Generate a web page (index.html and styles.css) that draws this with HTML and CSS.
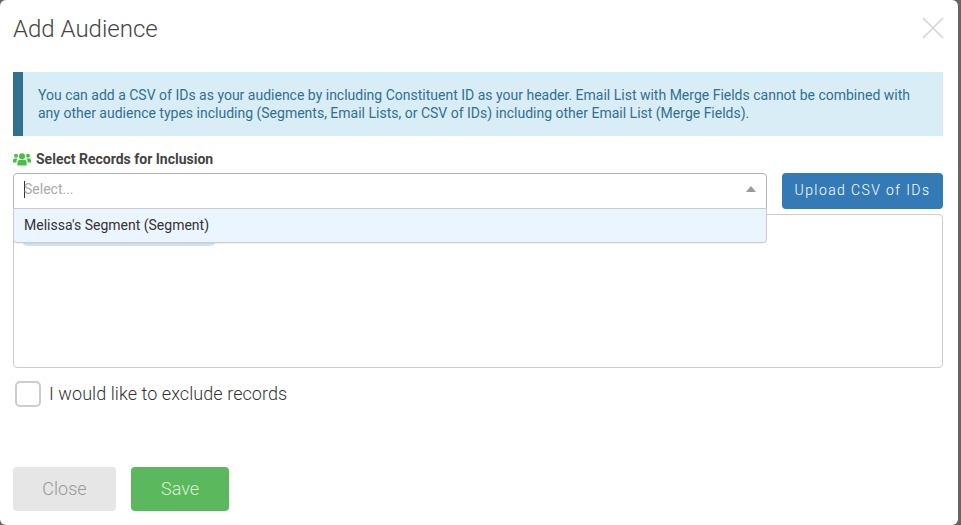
FILE: index.html
```html
<!DOCTYPE html>
<html lang="en">
<head>
    <meta charset="UTF-8">
    <meta name="viewport" content="width=device-width, initial-scale=1.0">
    <title>Add Audience</title>
    <link rel="stylesheet" href="styles.css">
</head>
<body>
    <div class="modal">
        <div class="modal-header">
            <h1>Add Audience</h1>
            <svg class="close-icon" width="24" height="24" viewBox="0 0 24 24">
                <path d="M2 2 L22 22 M22 2 L2 22" stroke="#d4d4d4" stroke-width="1.6" fill="none"/>
            </svg>
        </div>

        <div class="alert">
            You can add a CSV of IDs as your audience by including Constituent ID as your header. Email List with Merge Fields cannot be combined with any other audience types including (Segments, Email Lists, or CSV of IDs) including other Email List (Merge Fields).
        </div>

        <div class="field-label">
            <svg class="users-icon" width="18" height="13" viewBox="0 0 18 13">
                <circle cx="9" cy="3.2" r="3" fill="#45c045"/>
                <circle cx="3" cy="2.8" r="2" fill="#45c045"/>
                <circle cx="15" cy="2.8" r="2" fill="#45c045"/>
                <path d="M4.4 12.5 V9.6 C4.4 7.6 5.8 6.8 7 6.8 H11 C12.2 6.8 13.6 7.6 13.6 9.6 V12.5 Z" fill="#45c045"/>
                <path d="M0 9.4 V7.2 C0 6 1 5.4 2 5.4 H4.6 C3.8 6.4 3.4 7.4 3.4 9.4 Z M18 9.4 V7.2 C18 6 17 5.4 16 5.4 H13.4 C14.2 6.4 14.6 7.4 14.6 9.4 Z" fill="#45c045"/>
            </svg>
            Select Records for Inclusion
        </div>

        <div class="select-row">
            <div class="select">
                <div class="select-control">
                    <span class="caret-bar"></span>
                    <span class="placeholder">Select...</span>
                    <span class="arrow"></span>
                </div>
                <div class="select-menu">
                    <div class="select-option">Melissa's Segment (Segment)</div>
                </div>
            </div>
            <button class="btn btn-upload">Upload CSV of IDs</button>
        </div>

        <div class="selected-box">
            <span class="chip"></span>
        </div>

        <label class="exclude">
            <span class="checkbox"></span>
            <span class="exclude-text">I would like to exclude records</span>
        </label>

        <div class="footer">
            <button class="btn btn-close">Close</button>
            <button class="btn btn-save">Save</button>
        </div>
    </div>
</body>
</html>
```

FILE: styles.css
```css
html, body {
    height: 100%;
}
body {
    margin: 0;
    background: #666;
    font-family: Roboto, "Liberation Sans", sans-serif;
    overflow: hidden;
}
.modal {
    box-sizing: border-box;
    width: 958px;
    height: 525px;
    padding: 0 15px 0 13px;
    background: #fff;
    border-radius: 6px;
}
.modal-header {
    display: flex;
    justify-content: space-between;
    align-items: flex-start;
    height: 72px;
}
.modal-header h1 {
    margin: 15px 0 0;
    font-size: 24px;
    line-height: 28px;
    font-weight: 300;
    color: #444;
}
.close-icon {
    margin: 16px -2px 0 0;
}
.alert {
    box-sizing: border-box;
    height: 64px;
    padding: 14px 20px 0 15px;
    background: #d9edf7;
    border-left: 10px solid #31708f;
    color: #31708f;
    font-size: 14px;
    line-height: 18px;
}
.field-label {
    display: flex;
    align-items: center;
    gap: 5px;
    height: 18px;
    margin-top: 14px;
    font-size: 14px;
    font-weight: 700;
    color: #444;
}
.select-row {
    display: flex;
    gap: 15px;
    margin-top: 5px;
    align-items: flex-start;
}
.select {
    position: relative;
    flex: 1;
}
.select-control {
    position: relative;
    box-sizing: border-box;
    height: 36px;
    padding: 0 10px 4px;
    display: flex;
    align-items: center;
    border: 1px solid #b3b3b3;
    border-radius: 4px 4px 0 0;
    background: #fff;
}
.caret-bar {
    width: 1px;
    height: 17px;
    background: #333;
    margin-right: -1px;
}
.placeholder {
    font-size: 14px;
    color: #aaa;
}
.arrow {
    margin-left: auto;
    width: 0;
    height: 0;
    border-left: 5.5px solid transparent;
    border-right: 5.5px solid transparent;
    border-bottom: 6px solid #999;
}
.select-menu {
    position: absolute;
    left: 0;
    right: 0;
    top: 35px;
    z-index: 2;
    box-sizing: border-box;
    height: 35px;
    background: #ebf5ff;
    border: 1px solid #ccc;
    border-radius: 0 0 4px 4px;
    box-shadow: 0 1px 1px rgba(0, 0, 0, 0.06);
}
.select-option {
    padding: 0 10px;
    font-size: 14px;
    line-height: 33px;
    color: #333;
}
.btn {
    border: none;
    border-radius: 4px;
    font-family: inherit;
    cursor: pointer;
}
.btn-upload {
    width: 161px;
    height: 36px;
    padding-bottom: 3px;
    background: #337ab7;
    color: #fff;
    font-size: 14px;
    font-weight: 300;
    letter-spacing: 1.4px;
}
.selected-box {
    box-sizing: border-box;
    height: 154px;
    margin-top: 5px;
    padding: 9px 8px;
    border: 1px solid #ccc;
    border-radius: 4px;
}
.chip {
    display: block;
    width: 194px;
    height: 22px;
    background: #cfe3f5;
    border-radius: 6px;
}
.exclude {
    display: flex;
    align-items: center;
    gap: 8px;
    margin: 13px 0 0 2px;
    font-size: 18px;
    font-weight: 300;
    letter-spacing: 0.07px;
    color: #333;
}
.exclude-text {
    margin-bottom: 2px;
}
.checkbox {
    box-sizing: border-box;
    width: 26px;
    height: 26px;
    border: 2px solid #ccc;
    border-radius: 5px;
}
.footer {
    display: flex;
    gap: 15px;
    margin-top: 60px;
}
.btn-close, .btn-save {
    height: 44px;
    padding-bottom: 3px;
    font-size: 18px;
    font-weight: 300;
}
.btn-close {
    width: 103px;
    background: #e6e6e6;
    color: #999;
}
.btn-save {
    width: 98px;
    background: #5cb85c;
    color: #d6f2d6;
}
```
